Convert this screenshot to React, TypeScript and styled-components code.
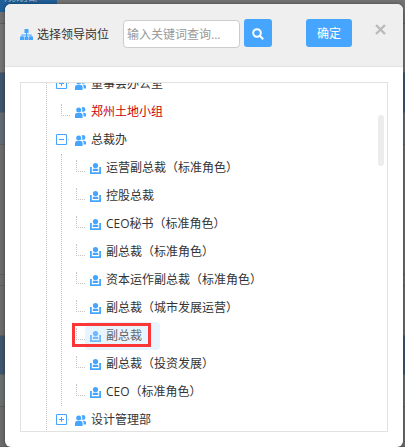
import React from 'react';
import styled, { createGlobalStyle } from 'styled-components';

const GlobalStyle = createGlobalStyle`
  * { box-sizing: border-box; }
  html, body, #root { height: 100%; }
  body {
    margin: 0;
    overflow: hidden;
    color: #333;
    font: 12px/28px "Open Sans", "Noto Sans CJK SC", sans-serif;
  }
  button, input { font: inherit; }
  ul { margin: 0; padding: 0; list-style: none; }
`;

const Page = styled.div`
  position: relative;
  height: 100%;
  background: #6c6c6c;
`;

const Backdrop = styled.div`
  position: absolute;
  inset: 0;
  display: flex;
  flex-direction: column;
  overflow: hidden;
`;

const TabStrip = styled.div`
  height: 12px;
  flex: none;
  background: #757575;
`;

const Tab = styled.div`
  width: 57px;
  height: 12px;
  padding-left: 4px;
  overflow: hidden;
  background: #1f5f99;
  color: #8fa9c0;
  white-space: nowrap;
`;

const TabLabel = styled.div`
  margin-top: -12px;
  line-height: 18px;
`;

const Band = styled.div<{ $height: number; $color: string }>`
  flex: none;
  height: ${(p) => p.$height}px;
  background: ${(p) => p.$color};
  border-bottom: 1px solid #5e5e5e;
`;

const Stage = styled.div`
  position: relative;
  height: 100%;
  padding: 4px 2px 0 5px;
`;

const Dialog = styled.section`
  display: flex;
  flex-direction: column;
  height: 100%;
  overflow: hidden;
  border-radius: 6px;
  background: #fff;
  box-shadow: 0 0 4px rgba(0, 0, 0, 0.4);
`;

const Header = styled.header`
  display: flex;
  flex: none;
  align-items: flex-start;
  height: 63px;
  padding: 15px 16px 0 15px;
  border-bottom: 1px solid #e3e3e3;
  background: #efefef;
`;

const Title = styled.h1`
  display: flex;
  align-items: center;
  gap: 4px;
  width: 103px;
  height: 30px;
  margin: 0;
  padding-top: 2px;
  font-size: 12px;
  font-weight: 400;
  white-space: nowrap;
`;

const Search = styled.form`
  display: flex;
  gap: 4px;
`;

const SearchInput = styled.input`
  width: 117px;
  height: 28px;
  margin-top: 1px;
  padding: 1px 3px 0;
  border: 1px solid #ccc;
  border-radius: 4px;
  background: #fff;
  color: #333;
  outline: none;
  &::placeholder { color: #999; opacity: 1; }
`;

const Button = styled.button<{ $width: number }>`
  display: flex;
  align-items: center;
  justify-content: center;
  width: ${(p) => p.$width}px;
  height: 28px;
  padding: 2px 0 0;
  border: 0;
  border-radius: 3px;
  background: #46a6ff;
  color: #fff;
  cursor: pointer;
`;

const Actions = styled.div`
  display: flex;
  flex: 1;
  justify-content: flex-end;
  gap: 22px;
`;

const Close = styled.button`
  display: flex;
  align-items: center;
  justify-content: center;
  width: 13px;
  height: 20px;
  padding: 0;
  border: 0;
  background: none;
  cursor: pointer;
`;

const Body = styled.div`
  flex: 1;
  display: flex;
  min-height: 0;
  padding: 15px;
`;

const TreePanel = styled.div`
  position: relative;
  flex: 1;
  overflow: hidden;
  padding-left: 25px;
  border: 1px solid #e1e1e1;
`;

const Thumb = styled.div`
  position: absolute;
  top: 32px;
  right: 3px;
  width: 6px;
  height: 51px;
  border-radius: 3px;
  background: #ececec;
`;

const Root = styled.ul`
  margin-top: -13px;
  border-left: 1px dotted #c4c4c4;
`;

const Item = styled.li`
  padding-left: 9px;
`;

const Branch = styled.ul`
  margin-left: 5px;
  border-left: 1px dotted #c4c4c4;
`;

const Row = styled.div`
  position: relative;
  display: flex;
  align-items: center;
  height: 28px;
`;

const Toggle = styled.button`
  display: flex;
  width: 14px;
  height: 12px;
  padding: 0;
  border: 0;
  background: none;
  cursor: pointer;
`;

const Elbow = styled.span`
  width: 9px;
  height: 12px;
  margin-left: 5px;
  margin-bottom: 4px;
  border: dotted #c4c4c4;
  border-width: 0 0 1px 1px;
`;

const Node = styled.a<{ $tone: 'normal' | 'alert' | 'active' }>`
  display: flex;
  align-items: center;
  gap: 5px;
  height: 28px;
  padding: 0 18px 0 5px;
  border-radius: 4px;
  color: ${(p) => (p.$tone === 'alert' ? '#c00' : p.$tone === 'active' ? '#666' : '#333')};
  background: ${(p) => (p.$tone === 'active' ? '#e8f4ff' : 'transparent')};
  text-decoration: none;
  white-space: nowrap;
  svg { opacity: ${(p) => (p.$tone === 'active' ? 0.75 : 1)}; }
`;

const Highlight = styled.span`
  position: absolute;
  top: 1px;
  left: 1px;
  width: 79px;
  height: 24px;
  border: 3px solid #fa3636;
  pointer-events: none;
`;

const SitemapIcon = () => (
  <svg width="13" height="12" viewBox="0 0 13 12" fill="#46a6ff" aria-hidden="true">
    <path d="M4.5 0h4v4H7v1.5h4.5V7.5H13V11H9V7.5h1.5v-1H7v1h1.5V11h-4V7.5H6v-1H2.5v1H4V11H0V7.5h1.5v-2H6V4H4.5z" />
  </svg>
);

const GroupIcon = () => (
  <svg width="11" height="11" viewBox="0 0 11 11" fill="#46a6ff" aria-hidden="true">
    <circle cx="3.7" cy="3" r="2.5" />
    <path d="M0 11V8Q0 6 2 6h3.6Q7.6 6 7.6 8v3z" />
    <path d="M6.6.5Q7.4 0 8.4 0 10.4.2 10.4 2.4T8.4 4.8H6.7Q7.9 2.5 6.6.5zM7.8 5.7h1.4Q11 5.8 11 7.6v2H8.6V8q0-1.4-.8-2.3z" />
  </svg>
);

const PostIcon = () => (
  <svg width="11" height="11" viewBox="0 0 11 11" fill="#46a6ff" aria-hidden="true">
    <circle cx="5.5" cy="2.6" r="2.6" />
    <path d="M0 4h1.8v5.2h7.4V4H11v7H0z" />
    <path d="M2.8 8.1V6.8q0-1 1-1h3.4q1 0 1 1v1.3z" />
  </svg>
);

const ToggleIcon = ({ open }: { open: boolean }) => (
  <svg width="14" height="11" viewBox="0 0 14 11" fill="none" stroke="#46a6ff" aria-hidden="true">
    <path d={open ? 'M.5.5h10v10H.5zM3 5.5h5' : 'M.5.5h10v10H.5zM3 5.5h5M5.5 3v5'} />
    <path d="M12 5.5h1" stroke="#c4c4c4" />
  </svg>
);

type TreeNode = {
  label: string;
  kind: 'group' | 'post';
  open?: boolean;
  leaf?: boolean;
  tone?: 'alert' | 'active';
  children?: TreeNode[];
};

const post = (label: string, tone?: 'active'): TreeNode => ({ label, kind: 'post', leaf: true, tone });

const nodes: TreeNode[] = [
  { label: '董事会办公室', kind: 'group' },
  { label: '郑州土地小组', kind: 'group', leaf: true, tone: 'alert' },
  {
    label: '总裁办',
    kind: 'group',
    open: true,
    children: [
      post('运营副总裁（标准角色）'),
      post('控股总裁'),
      post('CEO秘书（标准角色）'),
      post('副总裁（标准角色）'),
      post('资本运作副总裁（标准角色）'),
      post('副总裁（城市发展运营）'),
      post('副总裁', 'active'),
      post('副总裁（投资发展）'),
      post('CEO（标准角色）'),
    ],
  },
  { label: '设计管理部', kind: 'group' },
];

const bands = [
  { height: 12, color: '#707070' },
  { height: 49, color: '#747474' },
  { height: 40, color: '#40566f' },
  { height: 32, color: '#626b74' },
  { height: 130, color: '#6c6c6c' },
  { height: 11, color: '#6c6c6c' },
  { height: 50, color: '#6c6c6c' },
  { height: 39, color: '#40566f' },
  { height: 32, color: '#69706f' },
  { height: 40, color: '#6c6c6c' },
];

const TreeItem = ({ node }: { node: TreeNode }) => (
  <Item>
    <Row>
      {node.leaf ? (
        <Elbow />
      ) : (
        <Toggle type="button" aria-label={node.label} aria-expanded={!!node.open}>
          <ToggleIcon open={!!node.open} />
        </Toggle>
      )}
      <Node href="#" $tone={node.tone ?? 'normal'}>
        {node.kind === 'group' ? <GroupIcon /> : <PostIcon />}
        {node.label}
      </Node>
      {node.tone === 'active' && <Highlight />}
    </Row>
    {node.children && (
      <Branch>
        {node.children.map((child) => (
          <TreeItem key={child.label} node={child} />
        ))}
      </Branch>
    )}
  </Item>
);

export default function App() {
  return (
    <Page>
      <GlobalStyle />
      <Backdrop aria-hidden="true">
        <TabStrip>
          <Tab><TabLabel>规划部</TabLabel></Tab>
        </TabStrip>
        {bands.map((band, index) => (
          <Band key={index} $height={band.height} $color={band.color} />
        ))}
      </Backdrop>
      <Stage>
        <Dialog role="dialog" aria-label="选择领导岗位">
          <Header>
            <Title><SitemapIcon />选择领导岗位</Title>
            <Search onSubmit={(e) => e.preventDefault()}>
              <SearchInput type="text" aria-label="关键词" placeholder="输入关键词查询..." />
              <Button $width={28} type="submit" aria-label="查询">
                <svg width="12" height="12" viewBox="0 0 12 12" fill="none" stroke="#fff" strokeWidth="2" aria-hidden="true">
                  <circle cx="5" cy="5" r="3.8" />
                  <path d="M7.8 7.8l3.4 3.4" />
                </svg>
              </Button>
            </Search>
            <Actions>
              <Button $width={46} type="button">确定</Button>
              <Close type="button" aria-label="关闭">
                <svg width="11" height="11" viewBox="0 0 11 11" fill="none" stroke="#bbb" strokeWidth="2.4" aria-hidden="true">
                  <path d="M1 1l9 9M10 1l-9 9" />
                </svg>
              </Close>
            </Actions>
          </Header>
          <Body>
            <TreePanel>
              <Root>
                {nodes.map((node) => (
                  <TreeItem key={node.label} node={node} />
                ))}
              </Root>
              <Thumb />
            </TreePanel>
          </Body>
        </Dialog>
      </Stage>
    </Page>
  );
}
